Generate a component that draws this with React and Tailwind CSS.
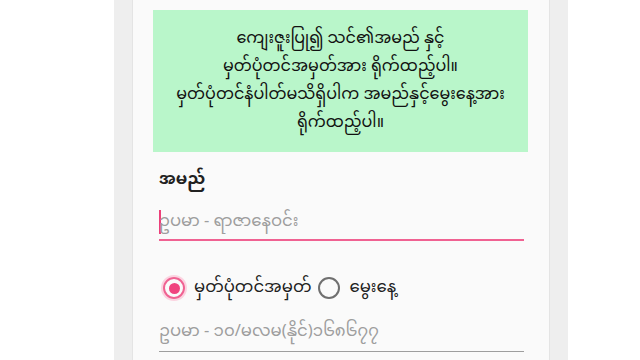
import React, { useState } from 'react';

const myFont = { fontFamily: '"Noto Sans Myanmar", "Padauk", "Myanmar Text", "Noto Sans", sans-serif' };

const Radio = ({ checked, label, onClick }) => (
  <button onClick={onClick} className="flex items-center gap-[9px]">
    {checked ? (
      <span className="w-[22px] h-[22px] rounded-full border-2 border-[#f06292] shadow-[0_0_0_2px_#fbd3e0] flex items-center justify-center">
        <span className="w-[11px] h-[11px] rounded-full bg-[#f0447f]" />
      </span>
    ) : (
      <span className="w-[22px] h-[22px] rounded-full border-2 border-[#6f6f6f]" />
    )}
    <span>{label}</span>
  </button>
);

const App = () => {
  const [mode, setMode] = useState('nrc');

  return (
    <div className="w-[640px] h-[360px] overflow-hidden bg-white" style={myFont}>
      <div className="ml-[114px] w-[454px] h-full bg-[#eeeeee] px-[18px]">
        <div className="h-full bg-[#fafafa] border-x border-[#e4e4e4] pl-[20px] pr-[21px] pt-[10px]">
          <div className="bg-[#b9f6ca] h-[142px] pt-[2px] flex flex-col items-center justify-center text-[16px] leading-[28px] text-[#111] text-center">
            <p>ကျေးဇူးပြု၍ သင်၏အမည် နှင့်</p>
            <p>မှတ်ပုံတင်အမှတ်အား ရိုက်ထည့်ပါ။</p>
            <p>မှတ်ပုံတင်နံပါတ်မသိရှိပါက အမည်နှင့်မွေးနေ့အား</p>
            <p>ရိုက်ထည့်ပါ။</p>
          </div>

          <div className="pl-[6px] pr-[4px] text-[16.5px]">
            <label className="block mt-[14px] leading-[28px] font-bold text-[#212121]">အမည်</label>
            <div className="mt-[14px] border-b-2 border-[#f06292] pb-[3px] flex items-center">
              <span className="w-[2px] h-[24px] bg-[#ec407a] mr-[-2px]" />
              <input
                className="w-full bg-transparent outline-none leading-[28px] placeholder:text-[#9e9e9e]"
                placeholder="ဥပမာ - ရာဇာနေဝင်း"
                style={myFont}
              />
            </div>

            <div className="mt-[33px] h-[28px] pl-[4px] flex items-center gap-[7px] leading-[28px] text-[#212121]">
              <Radio checked={mode === 'nrc'} label="မှတ်ပုံတင်အမှတ်" onClick={() => setMode('nrc')} />
              <Radio checked={mode === 'dob'} label="မွေးနေ့" onClick={() => setMode('dob')} />
            </div>

            <div className="mt-[16px] border-b border-[#9e9e9e] pb-[5px]">
              <input
                className="w-full bg-transparent outline-none leading-[28px] placeholder:text-[#9e9e9e]"
                placeholder="ဥပမာ - ၁၀/မလမ(နိုင်)၁၆၈၆၇၇"
                style={myFont}
              />
            </div>
          </div>
        </div>
      </div>
    </div>
  );
};

export default App;
